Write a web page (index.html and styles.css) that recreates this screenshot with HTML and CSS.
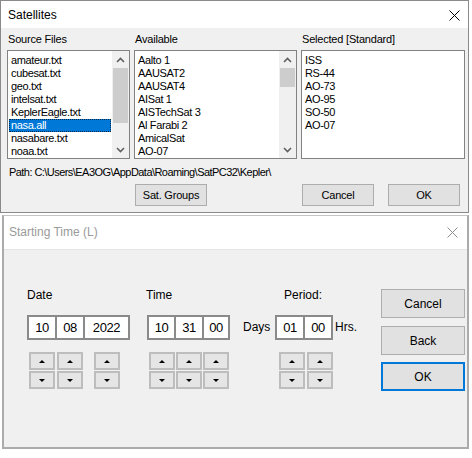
FILE: index.html
```html
<!DOCTYPE html>
<html>
<head>
<meta charset="utf-8">
<link rel="stylesheet" href="styles.css">
</head>
<body>
<div class="win win-sat">
  <div class="titlebar tb-sat">
    <span class="title">Satellites</span>
    <svg class="close" width="11" height="11" viewBox="0 0 11 11"><path d="M0.5 0.5 L10.5 10.5 M10.5 0.5 L0.5 10.5" stroke="#000" stroke-width="1"/></svg>
  </div>
  <div class="sat-body">
    <div class="cols">
      <div class="col">
        <div class="lbl">Source Files</div>
        <div class="listbox">
          <ul class="items">
            <li>amateur.txt</li>
            <li>cubesat.txt</li>
            <li>geo.txt</li>
            <li>intelsat.txt</li>
            <li>KeplerEagle.txt</li>
            <li class="sel">nasa.all</li>
            <li>nasabare.txt</li>
            <li>noaa.txt</li>
          </ul>
          <div class="vscroll">
            <div class="arrow"><svg width="9" height="6" viewBox="0 0 9 6"><path d="M1 5 L4.5 1.5 L8 5" fill="none" stroke="#606060" stroke-width="1.6"/></svg></div>
            <div class="track"><div class="thumb thumb-src"></div></div>
            <div class="arrow"><svg width="9" height="6" viewBox="0 0 9 6"><path d="M1 1 L4.5 4.5 L8 1" fill="none" stroke="#606060" stroke-width="1.6"/></svg></div>
          </div>
        </div>
      </div>
      <div class="col">
        <div class="lbl">Available</div>
        <div class="listbox">
          <ul class="items">
            <li>Aalto 1</li>
            <li>AAUSAT2</li>
            <li>AAUSAT4</li>
            <li>AISat 1</li>
            <li>AISTechSat 3</li>
            <li>Al Farabi 2</li>
            <li>AmicalSat</li>
            <li>AO-07</li>
          </ul>
          <div class="vscroll">
            <div class="arrow"><svg width="9" height="6" viewBox="0 0 9 6"><path d="M1 5 L4.5 1.5 L8 5" fill="none" stroke="#606060" stroke-width="1.6"/></svg></div>
            <div class="track"><div class="thumb thumb-av"></div></div>
            <div class="arrow"><svg width="9" height="6" viewBox="0 0 9 6"><path d="M1 1 L4.5 4.5 L8 1" fill="none" stroke="#606060" stroke-width="1.6"/></svg></div>
          </div>
        </div>
      </div>
      <div class="col">
        <div class="lbl">Selected [Standard]</div>
        <div class="listbox">
          <ul class="items">
            <li>ISS</li>
            <li>RS-44</li>
            <li>AO-73</li>
            <li>AO-95</li>
            <li>SO-50</li>
            <li>AO-07</li>
          </ul>
        </div>
      </div>
    </div>
    <div class="path">Path: C:\Users\EA3OG\AppData\Roaming\SatPC32\Kepler\</div>
    <div class="cols btnrow">
      <div></div>
      <div><button class="btn btn-sm btn-groups">Sat. Groups</button></div>
      <div class="btn-pair"><button class="btn btn-sm">Cancel</button><button class="btn btn-sm">OK</button></div>
    </div>
  </div>
</div>

<div class="win win-time">
  <div class="titlebar tb-time">
    <span class="title title-inactive">Starting Time (L)</span>
    <svg class="close" width="11" height="11" viewBox="0 0 11 11"><path d="M0.5 0.5 L10.5 10.5 M10.5 0.5 L0.5 10.5" stroke="#8c8c8c" stroke-width="1"/></svg>
  </div>
  <div class="time-body">
    <div class="group g-date">
      <div class="glbl">Date</div>
      <div class="fields">
        <div class="field"><div class="cell w30">10</div><div class="spin"><span class="up"></span></div><div class="spin"><span class="dn"></span></div></div>
        <div class="field ov"><div class="cell w30">08</div><div class="spin"><span class="up"></span></div><div class="spin"><span class="dn"></span></div></div>
        <div class="field ov"><div class="cell w47">2022</div><div class="spin"><span class="up"></span></div><div class="spin"><span class="dn"></span></div></div>
      </div>
    </div>
    <div class="group g-time">
      <div class="glbl">Time</div>
      <div class="fields">
        <div class="field"><div class="cell w29">10</div><div class="spin"><span class="up"></span></div><div class="spin"><span class="dn"></span></div></div>
        <div class="field ov"><div class="cell w30">31</div><div class="spin"><span class="up"></span></div><div class="spin"><span class="dn"></span></div></div>
        <div class="field ov"><div class="cell w28">00</div><div class="spin"><span class="up"></span></div><div class="spin"><span class="dn"></span></div></div>
      </div>
    </div>
    <div class="group g-period">
      <div class="glbl plbl">Period:</div>
      <div class="fields">
        <span class="unit days">Days</span>
        <div class="field shift"><div class="cell w30">01</div><div class="spin"><span class="up"></span></div><div class="spin"><span class="dn"></span></div></div>
        <div class="field ov shift"><div class="cell w30">00</div><div class="spin"><span class="up"></span></div><div class="spin"><span class="dn"></span></div></div>
        <span class="unit hrs">Hrs.</span>
      </div>
    </div>
    <div class="side-btns">
      <button class="btn btn-lg">Cancel</button>
      <button class="btn btn-lg">Back</button>
      <button class="btn btn-lg btn-default">OK</button>
    </div>
  </div>
</div>
</body>
</html>
```
FILE: styles.css
```css
* { box-sizing: border-box; }
html, body { margin: 0; padding: 0; background: #ffffff; }
body { font-family: "Liberation Sans", Arial, sans-serif; color: #000; }

.win { background: #f0f0f0; }

.win-sat {
  width: 469px;
  height: 213px;
  border: 1px solid #8a8a8a;
}

.titlebar {
  background: #ffffff;
  display: flex;
  align-items: center;
  justify-content: space-between;
  font-size: 12px;
}
.tb-sat { height: 27px; padding: 1px 8px 0 7px; }
.tb-time { height: 34px; padding: 0 9px 1px 5px; border-bottom: 1px solid #e6e6e6; }
.title-inactive { color: #9a9a9a; }

.sat-body { padding: 5px 2px 0 6px; font-size: 11px; }
.cols {
  display: grid;
  grid-template-columns: 123px 163px 164px;
  column-gap: 4px;
}
.lbl { height: 13px; line-height: 13px; padding-left: 1px; letter-spacing: -0.2px; }
.listbox {
  margin-top: 4px;
  height: 109px;
  border: 1px solid #828282;
  background: #fff;
  display: flex;
}
.items {
  list-style: none;
  margin: 0;
  padding: 3px 1px 0 1px;
  flex: 1;
}
.items li {
  height: 13px;
  line-height: 13px;
  padding-left: 2px;
  letter-spacing: -0.35px;
  white-space: nowrap;
}
.items li.sel {
  background: #0078d7;
  color: #fff;
  outline: 1px dotted #0a2a4a;
  outline-offset: -1px;
}
.vscroll {
  width: 17px;
  background: #f0f0f0;
  display: flex;
  flex-direction: column;
}
.arrow {
  height: 17px;
  display: flex;
  align-items: center;
  justify-content: center;
}
.track { flex: 1; padding: 0 1px; }
.thumb { background: #cdcdcd; }
.thumb-src { height: 55px; }
.thumb-av { height: 19px; }

.path { margin-top: 7px; height: 13px; line-height: 13px; padding-left: 2px; letter-spacing: -0.55px; }
.btnrow { margin-top: 5px; }

.btn {
  font-family: "Liberation Sans", Arial, sans-serif;
  background: #e1e1e1;
  border: 1px solid #adadad;
  color: #000;
  padding: 0;
  display: flex;
  align-items: center;
  justify-content: center;
}
.btn-sm { width: 72px; height: 22px; font-size: 11px; letter-spacing: -0.2px; }
.btn-groups { margin-left: 1px; }
.btn-pair { display: flex; gap: 14px; padding-left: 1px; }

.win-time {
  margin-top: 2px;
  margin-left: 2px;
  width: 467px;
  height: 234px;
  border: 2px solid #ababab;
  border-top: 1px solid #c4c4c4;
}
.time-body {
  height: 197px;
  display: flex;
  align-items: flex-start;
  padding: 38px 2px 0 23px;
  font-size: 12px;
}
.group { display: flex; flex-direction: column; }
.g-time { margin-left: 17px; }
.g-period { margin-left: 13px; }
.glbl { height: 14px; line-height: 14px; margin-bottom: 13px; }
.g-time .glbl { margin-left: -1px; }
.plbl { padding-left: 41px; }
.fields { display: flex; align-items: flex-start; }
.field { display: flex; flex-direction: column; align-items: center; }
.field.ov { margin-left: -2px; }
.field.shift .spin { margin-left: 4px; }
.cell {
  height: 25px;
  border: 2px solid #8a8a8a;
  background: #fff;
  display: flex;
  align-items: center;
  justify-content: center;
  font-size: 13px;
  letter-spacing: -0.4px;
}
.w28 { width: 28px; }
.w29 { width: 29px; }
.w30 { width: 30px; }
.w47 { width: 47px; }
.spin {
  width: 26px;
  height: 18px;
  background: #e5e5e5;
  border: 2px solid #bdbdbd;
  display: flex;
  align-items: center;
  justify-content: center;
}
.cell + .spin { margin-top: 12px; }
.spin + .spin { margin-top: 1px; }
.up {
  width: 0; height: 0;
  border-left: 3.5px solid transparent;
  border-right: 3.5px solid transparent;
  border-bottom: 3.5px solid #000;
}
.dn {
  width: 0; height: 0;
  border-left: 3.5px solid transparent;
  border-right: 3.5px solid transparent;
  border-top: 3.5px solid #000;
}
.unit { height: 25px; line-height: 25px; }
.days { width: 32px; }
.hrs { margin-left: 2px; }

.side-btns {
  margin-left: auto;
  margin-top: 1px;
  display: flex;
  flex-direction: column;
  gap: 8px;
}
.btn-lg { width: 84px; height: 29px; font-size: 12px; }
.btn-default { border: 2px solid #0078d7; margin-top: -1px; }
```
